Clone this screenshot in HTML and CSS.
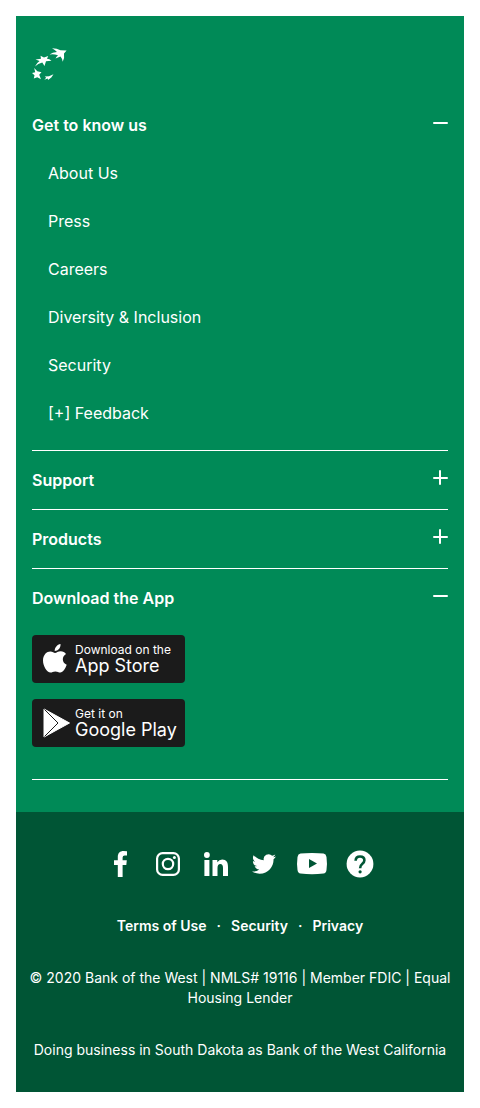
FILE: index.html
```html
<!DOCTYPE html>
<html lang="en">
<head>
<meta charset="utf-8">
<meta name="viewport" content="width=device-width, initial-scale=1">
<title>Bank of the West</title>
<link rel="stylesheet" href="styles.css">
</head>
<body>
<footer class="footer">
  <div class="footer-main">
    <a class="logo" href="#" aria-label="Bank of the West home">
      <svg width="36" height="32" viewBox="0 0 36 32" fill="currentColor" aria-hidden="true">
        <path d="M20 .300Q25 .500 28.500 2.200L34.600 2.500L32 5.500Q32.800 10 30.700 13.800Q30.300 10.500 28.500 8.500L23.500 10.500Q24.500 8.500 26 7.200Q21 5.700 17.500 6.600Q20.500 4.200 25 4Q23 2 20 .300Z"/>
        <path d="M8.500 7.800L12 9.500L16.200 8L15 10.800Q17.500 11 19.500 12.800L14 13.200L12.500 18L10.300 14.600Q6 15.800 3 18.500Q4.500 15 7.600 13L3.500 11.500L9 10.700Z"/>
        <path d="M2.200 20L5.300 23.300L9.500 24.300L7.200 26.800L9 31.300L5.300 29.300L1.800 30.500L2.500 27.300L0 25L3.200 24.300Z"/>
        <path d="M21.500 26.300L19.300 29.500L16 32L15.800 30.500L12.300 31.700L14.200 29.700L12.700 28.400L17 28.300Z"/>
      </svg>
    </a>

    <section class="group">
      <h2 class="group-title"><button class="toggle" type="button" aria-expanded="true" aria-controls="know-us">Get to know us<span class="sign"></span></button></h2>
      <ul class="link-list" id="know-us">
        <li><a href="#">About Us</a></li>
        <li><a href="#">Press</a></li>
        <li><a href="#">Careers</a></li>
        <li><a href="#">Diversity &amp; Inclusion</a></li>
        <li><a href="#">Security</a></li>
        <li><a href="#">[+] Feedback</a></li>
      </ul>
    </section>

    <section class="group">
      <h2 class="group-title"><button class="toggle" type="button" aria-expanded="false">Support<span class="sign"></span></button></h2>
    </section>

    <section class="group">
      <h2 class="group-title"><button class="toggle" type="button" aria-expanded="false">Products<span class="sign"></span></button></h2>
    </section>

    <section class="group">
      <h2 class="group-title"><button class="toggle" type="button" aria-expanded="true" aria-controls="apps">Download the App<span class="sign"></span></button></h2>
      <div class="badges" id="apps">
        <a class="badge" href="#">
          <svg width="24" height="30" viewBox="0 0 24 30" fill="currentColor" aria-hidden="true">
            <path d="M17.500 0C17.800 4 15 7 11.700 7C11.500 3.500 14.200 .500 17.500 0Z"/>
            <path d="M12 9C13.500 9 15 7.300 17.700 7.300C20 7.300 21.700 8.400 23 10C18.400 12.800 19 18.800 23.700 20.800C22.500 24.300 20 28.500 17.300 28.500C15.500 28.500 14.700 27.400 12.400 27.400C10 27.400 9.200 28.500 7.500 28.500C4 28.500 0 22.300 0 16.500C0 10.600 3.800 7.400 7.300 7.400C9.500 7.400 11 9 12 9Z"/>
          </svg>
          <span class="badge-text"><span class="badge-small">Download on the</span><span class="badge-large">App Store</span></span>
        </a>
        <a class="badge" href="#">
          <svg width="28" height="30" viewBox="0 0 28 30" aria-hidden="true">
            <path d="M1 1L26.500 15L1 29Z" fill="currentColor" stroke="currentColor" stroke-linejoin="round"/>
            <path d="M1.500 1.500L15 15L1.500 28.500" fill="none" stroke="#1b1b1b" stroke-width="1"/>
          </svg>
          <span class="badge-text"><span class="badge-small">Get it on</span><span class="badge-large">Google Play</span></span>
        </a>
      </div>
    </section>
  </div>

  <div class="footer-legal">
    <ul class="social">
      <li><a href="#" aria-label="Facebook"><svg width="32" height="32" viewBox="0 0 32 32" fill="currentColor"><path d="M13.800 29V17H10V12.300H13.800V9C13.800 5 16 3 19.500 3Q21.500 3 23 3.200V7.400H20.600Q18.600 7.400 18.600 9.500V12.300H22.800L22.300 17H18.600V29Z"/></svg></a></li>
      <li><a href="#" aria-label="Instagram"><svg width="32" height="32" viewBox="0 0 32 32" fill="none" stroke="currentColor" stroke-width="2.200"><rect x="5.100" y="5.100" width="21.800" height="21.800" rx="5.500"/><circle cx="16" cy="16" r="5.200"/><circle cx="22.400" cy="9.600" r="1.500" fill="currentColor" stroke="none"/></svg></a></li>
      <li><a href="#" aria-label="LinkedIn"><svg width="32" height="32" viewBox="0 0 32 32" fill="currentColor"><circle cx="6.900" cy="7" r="2.900"/><path d="M4.400 12H9.400V28H4.400ZM12.500 12H17.300V14.200Q19 11.600 22.200 11.600C26.500 11.600 28 14.500 28 19V28H23V20Q23 16 20.300 16Q17.500 16 17.500 20V28H12.500Z"/></svg></a></li>
      <li><a href="#" aria-label="Twitter"><svg width="32" height="32" viewBox="0 0 24 24" fill="currentColor"><path transform="translate(3 3) scale(.75)" d="M23.950 4.570a10 10 0 0 1-2.820.770 4.960 4.960 0 0 0 2.160-2.720c-.950.550-2 .950-3.130 1.180a4.920 4.920 0 0 0-8.380 4.480C7.690 8.090 4.070 6.130 1.640 3.160a4.820 4.820 0 0 0-.670 2.480c0 1.710.870 3.210 2.190 4.100a4.900 4.900 0 0 1-2.230-.620v.060a4.920 4.920 0 0 0 3.950 4.830 5 5 0 0 1-2.210.080 4.940 4.940 0 0 0 4.600 3.420A9.870 9.870 0 0 1 0 19.540a13.990 13.990 0 0 0 7.550 2.210c9.050 0 14-7.500 14-13.980 0-.210 0-.420-.020-.630a9.940 9.940 0 0 0 2.420-2.570z"/></svg></a></li>
      <li><a href="#" aria-label="YouTube"><svg width="32" height="32" viewBox="0 0 32 32" fill="currentColor"><path fill-rule="evenodd" d="M16 5Q23 5 27.500 5.600Q30 6 30.500 9Q31.400 15.500 30.500 22Q30 25.300 27.500 25.600Q16 26.800 4.500 25.600Q2 25.300 1.500 22Q.600 15.500 1.500 9Q2 6 4.500 5.600Q9 5 16 5ZM13 11V20L21 15.500Z"/></svg></a></li>
      <li><a href="#" aria-label="Help"><svg width="32" height="32" viewBox="0 0 32 32"><circle cx="16" cy="16" r="13.400" fill="currentColor"/><path d="M11.600 12.700Q11.800 8.500 16 8.500Q20.400 8.500 20.400 12.300Q20.400 14.100 18.400 15.700Q16.100 17.500 16.100 20.300" fill="none" stroke="#005535" stroke-width="2.600"/><circle cx="16.100" cy="23.800" r="1.600" fill="#005535"/></svg></a></li>
    </ul>
    <ul class="legal-links">
      <li><a href="#">Terms of Use</a></li>
      <li><a href="#">Security</a></li>
      <li><a href="#">Privacy</a></li>
    </ul>
    <p class="note">© 2020 Bank of the West | NMLS# 19116 | Member FDIC | Equal Housing Lender</p>
    <p class="note">Doing business in South Dakota as Bank of the West California</p>
  </div>
</footer>
</body>
</html>
```
FILE: styles.css
```css
* {
  box-sizing: border-box;
}

body {
  margin: 16px;
  font-family: Inter, "Liberation Sans", sans-serif;
  font-size: 16px;
  line-height: 24px;
  color: #fff;
  background: #fff;
}

a {
  color: inherit;
  text-decoration: none;
}

ul {
  margin: 0;
  padding: 0;
  list-style: none;
}

svg {
  display: block;
}

.footer-main {
  padding: 32px 16px;
  background: #008a57;
}

.logo {
  display: block;
  margin-bottom: 16px;
}

.group {
  border-bottom: 1px solid #fff;
}

.group-title {
  margin: 0;
  font-size: 16px;
}

.toggle {
  display: flex;
  align-items: center;
  justify-content: space-between;
  width: 100%;
  height: 58px;
  padding: 0;
  border: 0;
  background: none;
  color: inherit;
  font: inherit;
  font-weight: 600;
  text-align: left;
  cursor: pointer;
}

.sign {
  display: grid;
  width: 16px;
  height: 16px;
  margin-bottom: 5px;
  place-items: center;
}

.sign::before,
.toggle[aria-expanded="false"] .sign::after {
  content: "";
  grid-area: 1 / 1;
  width: 15px;
  height: 2px;
  border-radius: 1px;
  background: currentColor;
}

.toggle[aria-expanded="false"] .sign::after {
  width: 2px;
  height: 15px;
}

.link-list {
  display: flex;
  flex-direction: column;
  gap: 24px;
  padding: 7px 16px 25px;
}

.badges {
  display: flex;
  flex-direction: column;
  align-items: flex-start;
  gap: 16px;
  padding: 8px 0 32px;
}

.badge {
  display: grid;
  grid-template-columns: 24px auto;
  align-items: center;
  column-gap: 8px;
  min-width: 153px;
  height: 48px;
  padding: 0 8px 0 11px;
  border-radius: 4px;
  background: #1b1b1b;
}

.badge-text {
  display: flex;
  flex-direction: column;
  white-space: nowrap;
}

.badge-small {
  font-size: 12px;
  line-height: 14px;
}

.badge-large {
  font-size: 18px;
  line-height: 18px;
}

.footer-legal {
  padding: 36px 8px 32px;
  background: #005535;
  font-size: 14px;
  line-height: 20px;
  text-align: center;
}

.social,
.legal-links {
  display: flex;
  justify-content: center;
}

.social a {
  display: flex;
  justify-content: center;
  width: 48px;
}

.legal-links {
  margin-top: 36px;
  font-weight: 600;
}

.legal-links li + li::before {
  content: "·";
  margin: 0 10px;
}

.note {
  margin: 32px 0 0;
}
```
